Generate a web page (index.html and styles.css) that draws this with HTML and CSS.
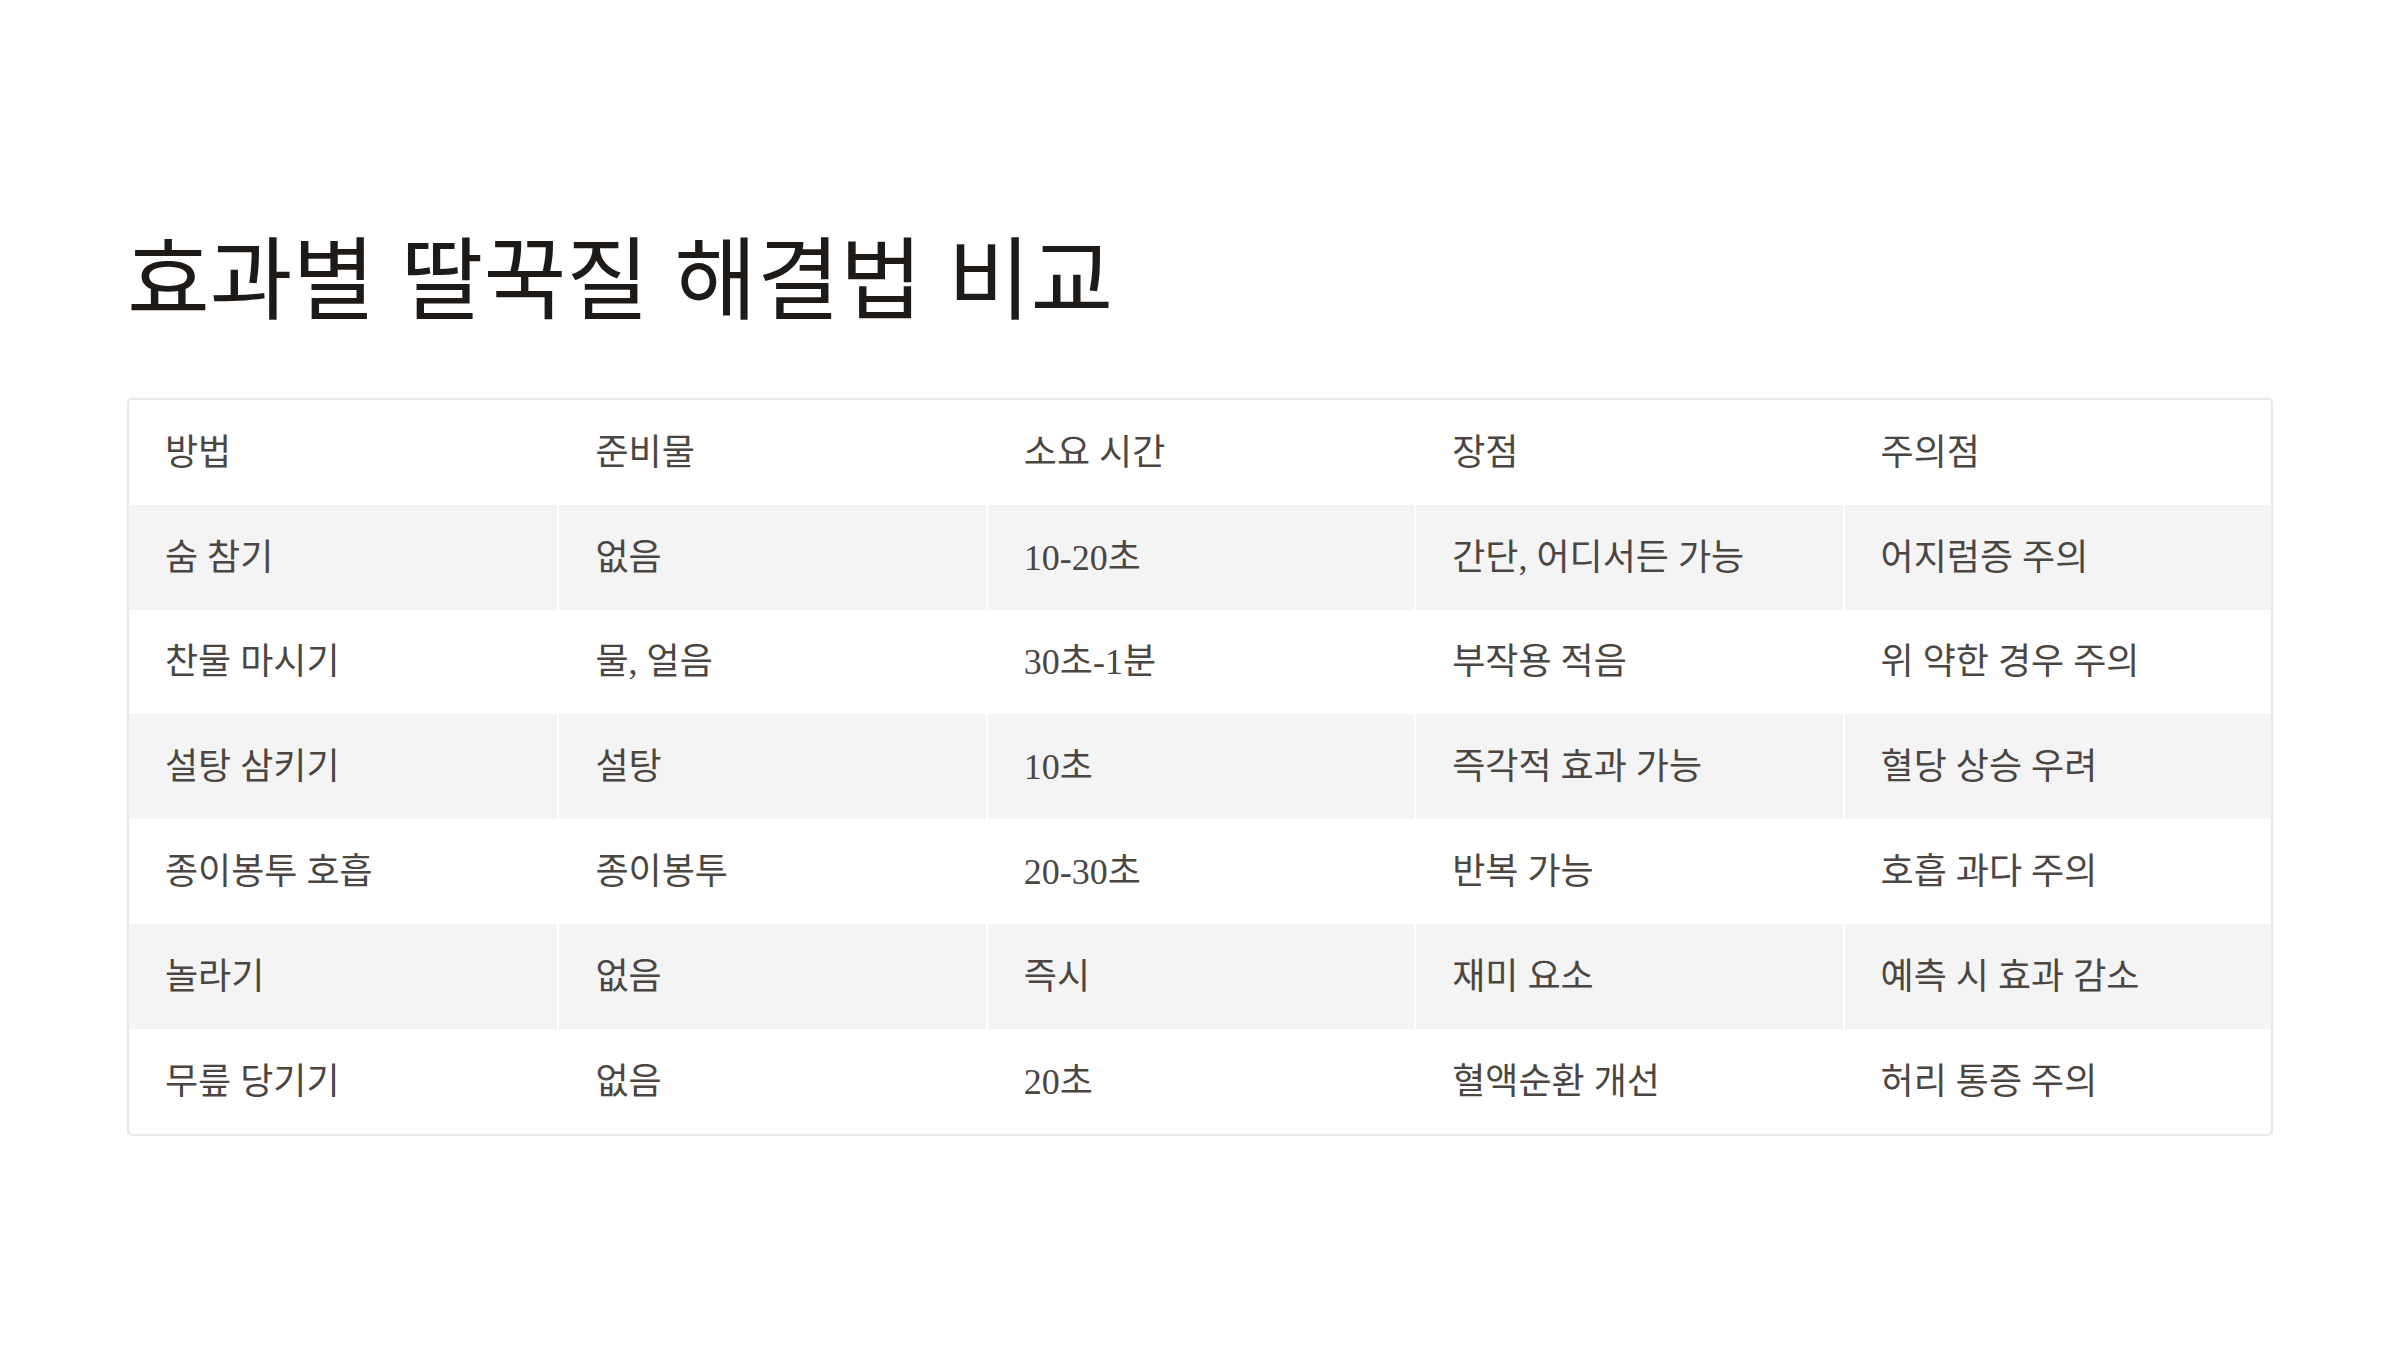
FILE: index.html
```html
<!DOCTYPE html>
<html lang="ko">
<head>
<meta charset="utf-8">
<title>효과별 딸꾹질 해결법 비교</title>
<link rel="stylesheet" href="styles.css">
</head>
<body>
<main class="page">
  <h1 class="title">효과별 딸꾹질 해결법 비교</h1>
  <div class="table-wrap">
    <table class="compare">
      <thead>
        <tr><th>방법</th><th>준비물</th><th>소요 시간</th><th>장점</th><th>주의점</th></tr>
      </thead>
      <tbody>
        <tr><td>숨 참기</td><td>없음</td><td>10-20초</td><td>간단, 어디서든 가능</td><td>어지럼증 주의</td></tr>
        <tr><td>찬물 마시기</td><td>물, 얼음</td><td>30초-1분</td><td>부작용 적음</td><td>위 약한 경우 주의</td></tr>
        <tr><td>설탕 삼키기</td><td>설탕</td><td>10초</td><td>즉각적 효과 가능</td><td>혈당 상승 우려</td></tr>
        <tr><td>종이봉투 호흡</td><td>종이봉투</td><td>20-30초</td><td>반복 가능</td><td>호흡 과다 주의</td></tr>
        <tr><td>놀라기</td><td>없음</td><td>즉시</td><td>재미 요소</td><td>예측 시 효과 감소</td></tr>
        <tr><td>무릎 당기기</td><td>없음</td><td>20초</td><td>혈액순환 개선</td><td>허리 통증 주의</td></tr>
      </tbody>
    </table>
  </div>
</main>
</body>
</html>
```

FILE: styles.css
```css
html, body {
  margin: 0;
  padding: 0;
  background: #ffffff;
}

.page {
  width: 2400px;
  height: 1350px;
  box-sizing: border-box;
  padding: 213px 127px 0;
  font-family: "Liberation Serif", "Noto Sans CJK KR", serif;
}

.title {
  margin: 0 0 65px;
  font-family: "Noto Sans CJK KR", sans-serif;
  font-weight: 400;
  font-size: 90px;
  line-height: 120px;
  color: #1e1a17;
  letter-spacing: 0;
}

.table-wrap {
  border: 2px solid #e9e9e9;
  border-radius: 5px;
  overflow: hidden;
}

.compare {
  width: 100%;
  border-collapse: separate;
  border-spacing: 0;
  table-layout: fixed;
}

.compare th,
.compare td {
  height: 104.8px;
  box-sizing: border-box;
  padding: 0 36px 7px;
  text-align: left;
  vertical-align: middle;
  font-weight: 400;
  font-size: 36px;
  color: #4b4642;
  border-left: 2px solid #ffffff;
}

.compare th:first-child,
.compare td:first-child {
  border-left: 0;
}

.compare tbody tr:nth-child(odd) td {
  background: #f4f4f4;
}
```
